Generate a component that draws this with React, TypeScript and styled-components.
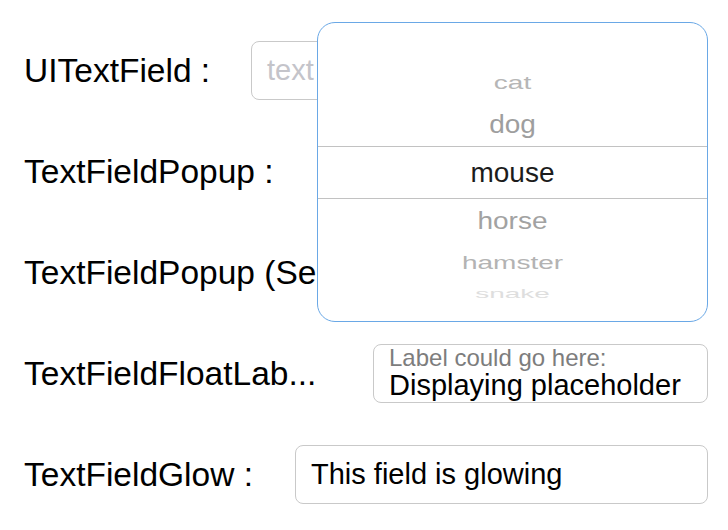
import React from "react";
import styled, { createGlobalStyle } from "styled-components";

const Global = createGlobalStyle`
  html, body {
    margin: 0;
    padding: 0;
    background: #ffffff;
    font-family: "Liberation Sans", Arial, sans-serif;
  }
  * { box-sizing: border-box; }
`;

const Page = styled.div`
  position: relative;
  width: 728px;
  height: 530px;
  overflow: hidden;
  background: #fff;
  padding: 41px 20px 0 24px;
  display: flex;
  flex-direction: column;
  gap: 42px;
`;

const Row = styled.div`
  display: flex;
  align-items: center;
  height: 59px;
`;

const Label = styled.div<{ $w: number }>`
  flex: 0 0 ${(p) => p.$w}px;
  font-size: 33.5px;
  color: #000;
  white-space: nowrap;
  overflow: hidden;
`;

const Field = styled.div`
  flex: 1;
  height: 59px;
  border: 1px solid #c9c9c9;
  border-radius: 8px;
  display: flex;
  align-items: center;
  padding: 0 15px;
  font-size: 29px;
  color: #000;
  white-space: nowrap;
  overflow: hidden;
`;

const Placeholder = styled.span`
  color: #c4c4ca;
`;

const FloatField = styled(Field)`
  flex-direction: column;
  align-items: flex-start;
  justify-content: flex-start;
  padding-top: 1px;
`;

const FloatLabel = styled.div`
  font-size: 24px;
  line-height: 24px;
  color: #7d7d7d;
`;

const FloatValue = styled.div`
  font-size: 29px;
  line-height: 30px;
  color: #000;
`;

const Popup = styled.div`
  position: absolute;
  left: 317px;
  top: 22px;
  width: 391px;
  height: 300px;
  border: 1px solid #6aa8e6;
  border-radius: 18px;
  background: #fff;
  overflow: hidden;
  padding-top: 39px;
  display: flex;
  flex-direction: column;
`;

const PickerItem = styled.div<{ $h: number; $selected?: boolean }>`
  flex: 0 0 ${(p) => p.$h}px;
  display: flex;
  align-items: center;
  justify-content: center;
  overflow: hidden;
  ${(p) =>
    p.$selected
      ? "border-top: 1px solid #c2c2c2; border-bottom: 1px solid #c2c2c2;"
      : ""}
`;

const PickerText = styled.span<{ $scale: number; $color: string }>`
  display: inline-block;
  font-size: 28px;
  line-height: 32px;
  color: ${(p) => p.$color};
  transform: scaleY(${(p) => p.$scale});
`;

const items = [
  { t: "cat", h: 41, s: 0.68, c: "#b6b6b6" },
  { t: "dog", h: 43, s: 0.9, c: "#9e9e9e" },
  { t: "mouse", h: 53, s: 1, c: "#1c1c1c", sel: true },
  { t: "horse", h: 44, s: 0.88, c: "#a2a2a2" },
  { t: "hamster", h: 40, s: 0.66, c: "#b3b3b3" },
  { t: "snake", h: 22, s: 0.45, c: "#dedede" },
];

export default function App() {
  return (
    <>
      <Global />
      <Page>
        <Row>
          <Label $w={227}>UITextField :</Label>
          <Field>
            <Placeholder>text</Placeholder>
          </Field>
        </Row>
        <Row>
          <Label $w={293}>TextFieldPopup :</Label>
          <Field />
        </Row>
        <Row>
          <Label $w={460}>TextFieldPopup (Selection) :</Label>
          <Field />
        </Row>
        <Row>
          <Label $w={349}>TextFieldFloatLab...</Label>
          <FloatField>
            <FloatLabel>Label could go here:</FloatLabel>
            <FloatValue>Displaying placeholder</FloatValue>
          </FloatField>
        </Row>
        <Row>
          <Label $w={271}>TextFieldGlow :</Label>
          <Field>This field is glowing</Field>
        </Row>
        <Popup>
          {items.map((it) => (
            <PickerItem key={it.t} $h={it.h} $selected={it.sel}>
              <PickerText $scale={it.s} $color={it.c}>
                {it.t}
              </PickerText>
            </PickerItem>
          ))}
        </Popup>
      </Page>
    </>
  );
}
